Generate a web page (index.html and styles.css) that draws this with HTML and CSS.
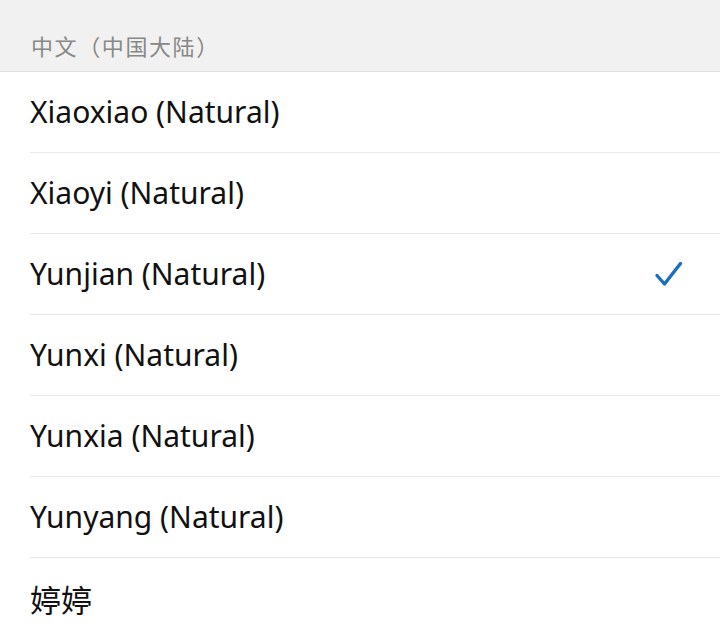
FILE: index.html
```html
<!DOCTYPE html>
<html lang="zh">
<head>
<meta charset="utf-8">
<link rel="stylesheet" href="styles.css">
</head>
<body>
<div class="header"><span class="header-text">中文（中国大陆）</span></div>
<ul class="list">
  <li class="row"><span class="label">Xiaoxiao (Natural)</span></li>
  <li class="row"><span class="label">Xiaoyi (Natural)</span></li>
  <li class="row"><span class="label">Yunjian (Natural)</span>
    <svg class="check" width="30" height="28" viewBox="0 0 30 28"><path d="M3 15.5 L10.5 24 L26.5 3.5" fill="none" stroke="#1c6fc0" stroke-width="3.4" stroke-linecap="round" stroke-linejoin="round"/></svg>
  </li>
  <li class="row"><span class="label">Yunxi (Natural)</span></li>
  <li class="row"><span class="label">Yunxia (Natural)</span></li>
  <li class="row"><span class="label">Yunyang (Natural)</span></li>
  <li class="row last"><span class="label cjk">婷婷</span></li>
</ul>
</body>
</html>
```
FILE: styles.css
```css
html, body {
  margin: 0;
  padding: 0;
  background: #ffffff;
  font-family: "Noto Sans", "Noto Sans CJK SC", sans-serif;
}
.header {
  height: 72px;
  background: #f1f1f1;
  border-bottom: 1px solid #e2e2e2;
  box-sizing: border-box;
  display: flex;
  align-items: flex-end;
  padding: 0 0 13px 31px;
}
.header-text {
  font-family: "Noto Sans CJK SC", sans-serif;
  font-size: 22px;
  line-height: 26px;
  color: #888888;
  letter-spacing: 1.6px;
  white-space: nowrap;
}
.list {
  list-style: none;
  margin: 0;
  padding: 0 0 0 30px;
}
.row {
  height: 81px;
  box-sizing: border-box;
  border-bottom: 1px solid #e8e8e8;
  display: flex;
  align-items: center;
  justify-content: space-between;
  padding-right: 36px;
}
.row.last {
  border-bottom: none;
}
.label {
  font-size: 30px;
  color: #111111;
  line-height: 34px;
}
.label.cjk {
  font-family: "Noto Sans CJK SC", sans-serif;
  font-size: 31px;
}
.check {
  display: block;
}
```
